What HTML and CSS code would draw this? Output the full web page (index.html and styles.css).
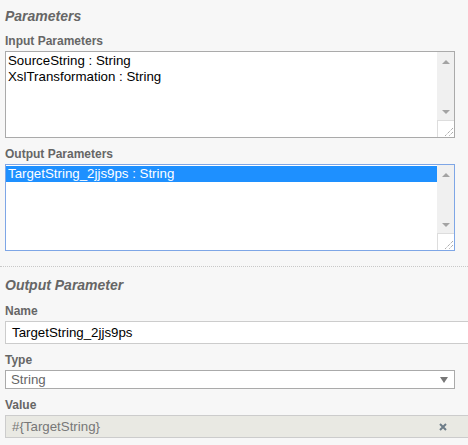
FILE: index.html
```html
<!DOCTYPE html>
<html lang="en">
<head>
    <meta charset="UTF-8">
    <title>Parameters</title>
    <link rel="stylesheet" href="styles.css">
</head>
<body>
    <section class="params">
        <h3>Parameters</h3>
        <label class="field-label">Input Parameters</label>
        <div class="list-box">
            <div class="list-items">
                <div class="item">SourceString : String</div>
                <div class="item">XslTransformation : String</div>
            </div>
            <div class="scroll-col">
                <div class="scroll-track">
                    <span class="arrow up"></span>
                    <span class="arrow down"></span>
                </div>
                <div class="resizer">
                    <svg width="16" height="16" viewBox="0 0 16 16">
                        <path d="M15 7 L7 15 M15 11 L11 15" stroke="#888" stroke-width="1" stroke-dasharray="1 1"/>
                    </svg>
                </div>
            </div>
        </div>

        <label class="field-label">Output Parameters</label>
        <div class="list-box focused">
            <div class="list-items">
                <div class="item selected">TargetString_2jjs9ps : String</div>
            </div>
            <div class="scroll-col">
                <div class="scroll-track">
                    <span class="arrow up"></span>
                    <span class="arrow down"></span>
                </div>
                <div class="resizer">
                    <svg width="16" height="16" viewBox="0 0 16 16">
                        <path d="M15 7 L7 15 M15 11 L11 15" stroke="#888" stroke-width="1" stroke-dasharray="1 1"/>
                    </svg>
                </div>
            </div>
        </div>
    </section>

    <section class="detail">
        <h3>Output Parameter</h3>
        <label class="field-label">Name</label>
        <div class="text-input">TargetString_2jjs9ps</div>

        <label class="field-label">Type</label>
        <div class="select">
            <span>String</span>
            <span class="caret"></span>
        </div>

        <label class="field-label">Value</label>
        <div class="text-input readonly">
            <span>#{TargetString}</span>
            <svg class="clear" width="8" height="8" viewBox="0 0 8 8">
                <path d="M1 1 L7 7 M7 1 L1 7" stroke="#6d7c88" stroke-width="2"/>
            </svg>
        </div>
    </section>
</body>
</html>
```

FILE: styles.css
```css
body {
    margin: 0;
    background-color: #f7f7f7;
    font-family: "Liberation Sans", Arial, sans-serif;
    color: #000;
}
h3 {
    margin: 0;
    font-size: 14px;
    line-height: 16px;
    font-weight: bold;
    font-style: italic;
    color: #666;
}
.params {
    padding: 8px 13px 15px 5px;
    display: flex;
    flex-direction: column;
}
.params h3 {
    margin-bottom: 10px;
}
.field-label {
    display: block;
    font-size: 12px;
    line-height: 14px;
    font-weight: bold;
    color: #666;
    margin-bottom: 3px;
}
.list-box {
    height: 85px;
    border: 1px solid #aaa;
    background-color: #fff;
    display: flex;
    margin-bottom: 9px;
}
.list-box.focused {
    border-color: #7ea6e6;
    margin-bottom: 0;
}
.list-items {
    flex: 1;
    padding-top: 1px;
}
.item {
    font-size: 13.3px;
    line-height: 16px;
    padding-left: 2px;
    height: 16px;
}
.item.selected {
    background-color: #1e90ff;
    color: #fff;
}
.scroll-col {
    width: 17px;
    display: flex;
    flex-direction: column;
}
.scroll-track {
    flex: 1;
    background-color: #f0f0f0;
    display: flex;
    flex-direction: column;
    justify-content: space-between;
    align-items: center;
    padding: 8px 0 6px;
}
.arrow {
    width: 0;
    height: 0;
    border-left: 4px solid transparent;
    border-right: 4px solid transparent;
}
.arrow.up {
    border-bottom: 4px solid #a3a3a3;
}
.arrow.down {
    border-top: 4px solid #a3a3a3;
}
.resizer {
    height: 16px;
    border-top: 1px solid #ddd;
    border-left: 1px solid #ddd;
    background-color: #fff;
    display: flex;
    justify-content: flex-end;
    align-items: flex-end;
}
.resizer svg {
    display: block;
}
.detail {
    border-top: 1px dotted #c8c8c8;
    padding: 10px 0 0 5px;
}
.detail h3 {
    margin-bottom: 11px;
}
.text-input {
    height: 21px;
    border: 1px solid #ccc;
    border-right: none;
    background-color: #fff;
    font-size: 13.3px;
    line-height: 21px;
    padding-left: 6px;
    margin-bottom: 9px;
}
.text-input.readonly {
    background-color: #e9e9e3;
    color: #777;
    display: flex;
    align-items: center;
    justify-content: space-between;
    padding-right: 21px;
    margin-bottom: 0;
}
.clear {
    display: block;
}
.select {
    width: 443px;
    height: 17px;
    border: 1px solid #aaa;
    background-color: #fff;
    font-size: 13.3px;
    line-height: 17px;
    color: #666;
    padding-left: 5px;
    display: flex;
    justify-content: space-between;
    align-items: center;
    margin-bottom: 9px;
}
.caret {
    width: 0;
    height: 0;
    border-left: 4px solid transparent;
    border-right: 4px solid transparent;
    border-top: 6px solid #777;
    margin-right: 6px;
}
```
